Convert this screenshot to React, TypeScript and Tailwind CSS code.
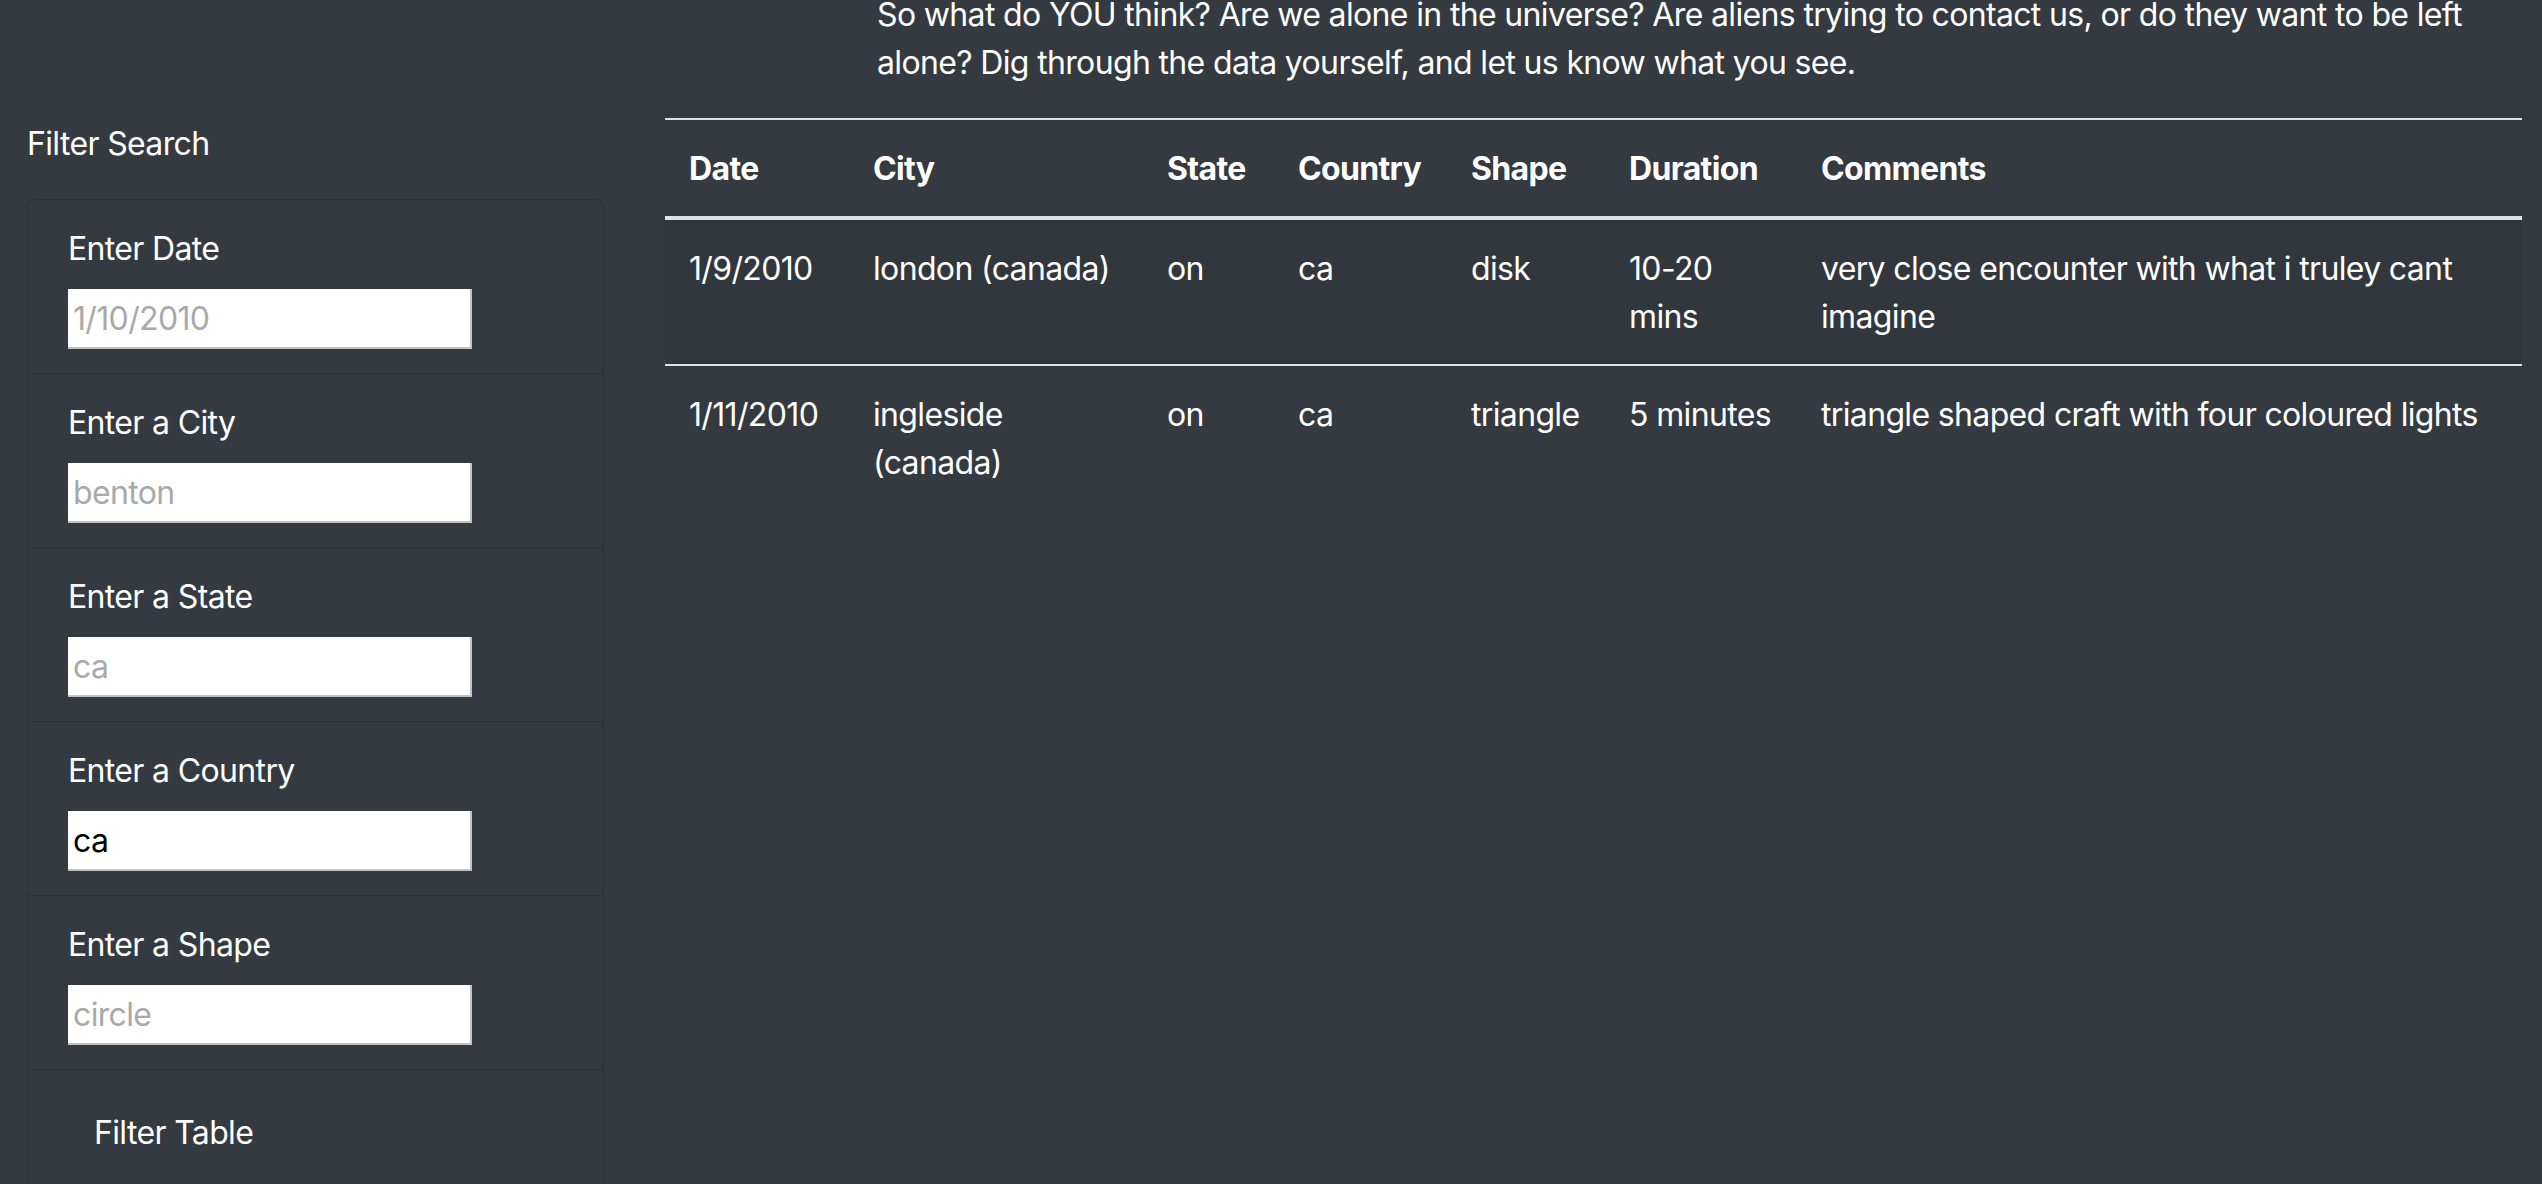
import React, { useState } from 'react';

type Sighting = {
  datetime: string;
  city: string[];
  state: string;
  country: string;
  shape: string;
  duration: string[];
  comments: string[];
};

const sightings: Sighting[] = [
  {
    datetime: '1/9/2010',
    city: ['london (canada)'],
    state: 'on',
    country: 'ca',
    shape: 'disk',
    duration: ['10-20', 'mins'],
    comments: ['very close encounter with what i truley cant', 'imagine'],
  },
  {
    datetime: '1/11/2010',
    city: ['ingleside', '(canada)'],
    state: 'on',
    country: 'ca',
    shape: 'triangle',
    duration: ['5 minutes'],
    comments: ['triangle shaped craft with four coloured lights'],
  },
];

const filters = [
  { id: 'datetime', label: 'Enter Date', placeholder: '1/10/2010', value: '' },
  { id: 'city', label: 'Enter a City', placeholder: 'benton', value: '' },
  { id: 'state', label: 'Enter a State', placeholder: 'ca', value: '' },
  { id: 'country', label: 'Enter a Country', placeholder: 'us', value: 'ca' },
  { id: 'shape', label: 'Enter a Shape', placeholder: 'circle', value: '' },
];

const columns = [
  { label: 'Date', width: 'w-[184px]' },
  { label: 'City', width: 'w-[294px]' },
  { label: 'State', width: 'w-[131px]' },
  { label: 'Country', width: 'w-[173px]' },
  { label: 'Shape', width: 'w-[158px]' },
  { label: 'Duration', width: 'w-[192px]' },
  { label: 'Comments', width: '' },
];

const Lines: React.FC<{ lines: string[] }> = ({ lines }) => (
  <>
    {lines.map((line, i) => (
      <React.Fragment key={i}>
        {i > 0 && <br />}
        {line}
      </React.Fragment>
    ))}
  </>
);

export default function App() {
  const [values, setValues] = useState<Record<string, string>>(
    Object.fromEntries(filters.map((f) => [f.id, f.value]))
  );

  return (
    <div className="h-[1184px] overflow-hidden bg-[#343a40] text-white flex font-['Inter',sans-serif] text-[32px] leading-[48px] tracking-[-0.65px]">
      {/* sidebar */}
      <aside className="w-[635px] shrink-0 pl-[27px] pr-[31px] pt-[120px]">
        <p className="mb-[31px]">Filter Search</p>
        <ul className="border border-[#2c3136] rounded-[8px]">
          {filters.map((f) => (
            <li key={f.id} className="px-[40px] pt-[25px] pb-[24px] border-b border-[#2c3136]">
              <label htmlFor={f.id} className="block mb-[16px]">
                {f.label}
              </label>
              <input
                id={f.id}
                type="text"
                placeholder={f.placeholder}
                value={values[f.id]}
                onChange={(e) => setValues({ ...values, [f.id]: e.target.value })}
                className="block w-[404px] h-[60px] bg-white text-black pl-[5px] border-b-2 border-r-2 border-[#c2c2c2] placeholder:text-[#a9a9a9] outline-none"
              />
            </li>
          ))}
          <li className="px-[40px] pt-[25px] pb-[24px]">
            <button
              type="button"
              className="border-2 border-transparent px-[24px] py-[12px] text-white"
            >
              Filter Table
            </button>
          </li>
        </ul>
      </aside>

      {/* main */}
      <main className="flex-1 pl-[30px] pr-[20px]">
        <p className="ml-[212px] -mt-[9px] mb-[31px] whitespace-nowrap">
          So what do YOU think? Are we alone in the universe? Are aliens trying to contact us, or do they want to be left
          <br />
          alone? Dig through the data yourself, and let us know what you see.
        </p>

        <table className="w-full border-separate border-spacing-0 text-left">
          <thead>
            <tr>
              {columns.map((c) => (
                <th
                  key={c.label}
                  className={`${c.width} px-[24px] pt-[25px] pb-[23px] font-bold border-t-2 border-b-4 border-[#dee2e6] align-bottom`}
                >
                  {c.label}
                </th>
              ))}
            </tr>
          </thead>
          <tbody>
            {sightings.map((s, i) => {
              const cell =
                i === 0
                  ? 'px-[24px] pt-[25px] pb-[23px] align-top whitespace-nowrap'
                  : 'px-[24px] pt-[25px] pb-[23px] align-top whitespace-nowrap border-t-2 border-[#dee2e6]';
              return (
                <tr key={i} className={i === 0 ? 'bg-black/5' : ''}>
                  <td className={cell}>{s.datetime}</td>
                  <td className={cell}>
                    <Lines lines={s.city} />
                  </td>
                  <td className={cell}>{s.state}</td>
                  <td className={cell}>{s.country}</td>
                  <td className={cell}>{s.shape}</td>
                  <td className={cell}>
                    <Lines lines={s.duration} />
                  </td>
                  <td className={cell}>
                    <Lines lines={s.comments} />
                  </td>
                </tr>
              );
            })}
          </tbody>
        </table>
      </main>
    </div>
  );
}
